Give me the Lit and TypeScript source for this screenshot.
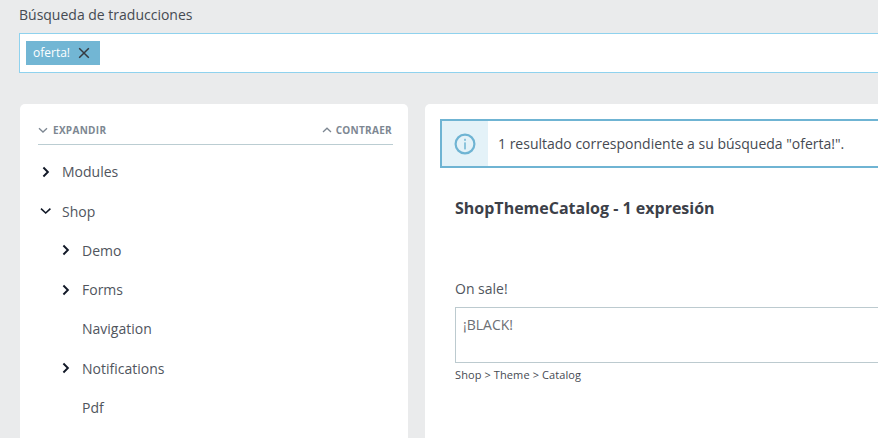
import { LitElement, html, css } from "lit";
import { customElement } from "lit/decorators.js";

const chevRight = html`<svg class="chev" viewBox="0 0 12 12" width="12" height="12"><path d="M3.4 1.5 7.9 6l-4.5 4.5" fill="none" stroke="#111827" stroke-width="1.9"/></svg>`;
const chevDown = html`<svg class="chev" viewBox="0 0 12 12" width="12" height="12"><path d="M1 3.6 5.7 8l4.7-4.4" fill="none" stroke="#111827" stroke-width="1.6"/></svg>`;

type Node = { label: string; depth: number; icon: "right" | "down" | "none" };
const tree: Node[] = [
  { label: "Modules", depth: 0, icon: "right" },
  { label: "Shop", depth: 0, icon: "down" },
  { label: "Demo", depth: 1, icon: "right" },
  { label: "Forms", depth: 1, icon: "right" },
  { label: "Navigation", depth: 1, icon: "none" },
  { label: "Notifications", depth: 1, icon: "right" },
  { label: "Pdf", depth: 1, icon: "none" },
];

@customElement("app-root")
export class AppRoot extends LitElement {
  static styles = css`
    :host {
      display: block;
      width: 878px;
      height: 438px;
      overflow: hidden;
      background: #eaebec;
      font-family: "Open Sans", sans-serif;
      color: #363a41;
      font-size: 14px;
    }
    .page {
      width: 1100px;
      padding: 5px 0 0 19px;
      box-sizing: border-box;
    }
    .title {
      line-height: 19px;
      height: 19px;
      font-size: 14px;
      color: #454a52;
      margin-bottom: 9px;
    }
    .input {
      height: 40px;
      box-sizing: border-box;
      border: 1px solid #8fd2ee;
      background: #fff;
      padding: 7px 6px;
      display: flex;
      align-items: flex-start;
    }
    .tag {
      height: 24px;
      width: 74px;
      box-sizing: border-box;
      background: #72b6d4;
      color: #fff;
      font-size: 12px;
      line-height: 24px;
      padding-left: 7px;
      display: flex;
      align-items: center;
      gap: 8px;
    }
    .tag svg { display: block; flex: none; }
    .cols {
      display: grid;
      grid-template-columns: 388px 1fr;
      gap: 17px;
      margin: 31px 0 0 1px;
    }
    .card {
      background: #fff;
      border-radius: 5px 5px 0 0;
      height: 400px;
      box-sizing: border-box;
    }
    .left { padding: 15px 15px 0 18px; }
    .bar {
      display: flex;
      justify-content: space-between;
      align-items: center;
      height: 26px;
      box-sizing: border-box;
      padding: 0 1px 3px 0;
      border-bottom: 1px solid #bbcdd2;
      font-size: 10px;
      font-weight: 700;
      letter-spacing: 0.3px;
      color: #7d8792;
    }
    .bar span { display: flex; align-items: center; gap: 5px; }
    .bar span + span { gap: 4px; }
    .bar svg { display: block; }
    .tree { margin-top: 7.25px; }
    .row {
      display: flex;
      align-items: center;
      height: 39.27px;
      color: #50555d;
      font-size: 14px;
    }
    .row.d1 { padding-left: 20px; }
    .ic { width: 24px; flex: none; display: flex; }
    .chev { display: block; margin-left: 2px; }
    .right { padding: 15px 0 0 15px; }
    .alert {
      height: 49px;
      box-sizing: border-box;
      border: 2px solid #6fb4d3;
      display: flex;
      align-items: center;
      font-size: 14px;
      color: #454a52;
    }
    .alert .box {
      width: 46px;
      height: 100%;
      background: #e4f2f8;
      display: flex;
      align-items: center;
      justify-content: center;
      flex: none;
    }
    .alert .msg { padding-left: 10px; }
    .content { padding-left: 15px; }
    h2 {
      margin: 29px 0 0;
      font-size: 16px;
      font-weight: 700;
      line-height: 22px;
      color: #3c4048;
    }
    .lbl {
      margin-top: 60px;
      line-height: 20px;
      font-size: 14px;
      color: #50555d;
    }
    .ta {
      margin-top: 8px;
      height: 56px;
      box-sizing: border-box;
      border: 1px solid #bccacf;
      padding: 7px 7px;
      font-size: 14px;
      line-height: 20px;
      color: #6c6f74;
    }
    .help {
      margin-top: 4px;
      font-size: 11px;
      line-height: 15px;
      letter-spacing: 0.1px;
      color: #454a52;
    }
  `;

  render() {
    return html`<div class="page">
      <div class="title">Búsqueda de traducciones</div>
      <div class="input">
        <div class="tag">oferta!
          <svg viewBox="0 0 12 12" width="12" height="12"><path d="M1.2 1.2 10.8 10.8M10.8 1.2 1.2 10.8" stroke="#363a41" stroke-width="1.5" fill="none"/></svg>
        </div>
      </div>
      <div class="cols">
        <div class="card left">
          <div class="bar">
            <span><svg viewBox="0 0 10 10" width="10" height="10"><path d="M1 3.2 5 7l4-3.8" fill="none" stroke="#7d8792" stroke-width="1.3"/></svg>EXPANDIR</span>
            <span><svg viewBox="0 0 10 10" width="10" height="10"><path d="M1 7 5 3.2 9 7" fill="none" stroke="#7d8792" stroke-width="1.3"/></svg>CONTRAER</span>
          </div>
          <div class="tree">
            ${tree.map(n => html`<div class="row ${n.depth ? "d1" : ""}">
              <span class="ic">${n.icon === "right" ? chevRight : n.icon === "down" ? chevDown : ""}</span>${n.label}
            </div>`)}
          </div>
        </div>
        <div class="card right">
          <div class="alert">
            <div class="box">
              <svg viewBox="0 0 22 22" width="22" height="22">
                <circle cx="11" cy="11" r="9.4" fill="none" stroke="#6fb4d3" stroke-width="2.2"/>
                <rect x="10" y="9.4" width="2" height="7" fill="#8cc4dc"/>
                <rect x="10" y="5.8" width="2" height="2" fill="#8cc4dc"/>
              </svg>
            </div>
            <div class="msg">1 resultado correspondiente a su búsqueda "oferta!".</div>
          </div>
          <div class="content">
            <h2>ShopThemeCatalog - 1 expresión</h2>
            <div class="lbl">On sale!</div>
            <div class="ta">¡BLACK!</div>
            <div class="help">Shop &gt; Theme &gt; Catalog</div>
          </div>
        </div>
      </div>
    </div>`;
  }
}
